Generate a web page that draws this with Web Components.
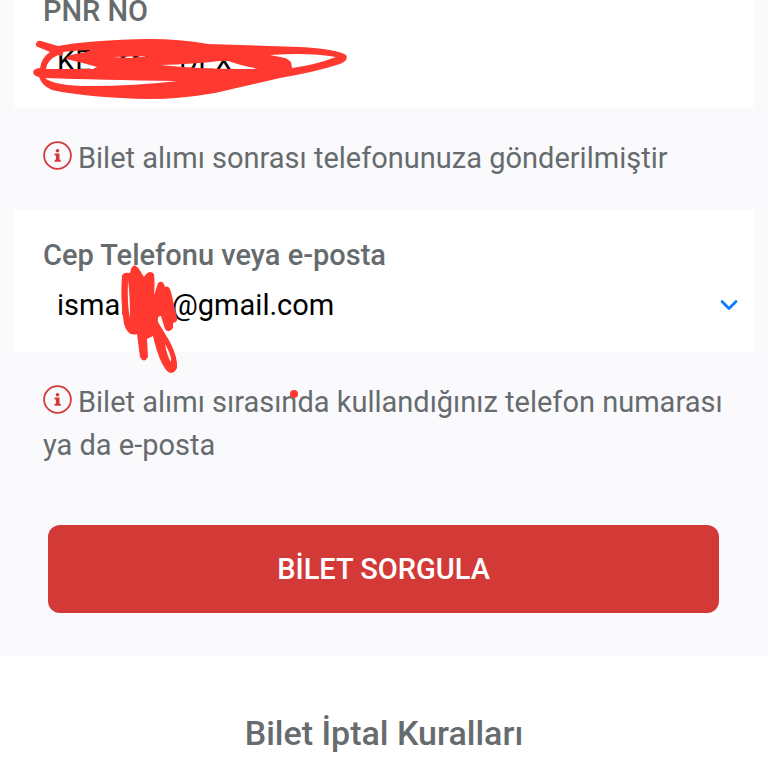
<!DOCTYPE html>
<html lang="tr">
<head>
<meta charset="utf-8">
<meta name="viewport" content="width=device-width, initial-scale=1">
<title>Bilet Sorgula</title>
<style>
  body {
    margin: 0;
    position: relative;
    overflow: hidden;
    background: #fff;
    color: #666b6e;
    font: 29px/43px Roboto, "Liberation Sans", sans-serif;
  }
</style>
</head>
<body>
<ticket-query></ticket-query>
<ink-marks></ink-marks>

<script>
// Small base class: stamps the static `html` of each element into a shadow root
class BaseElement extends HTMLElement {
  constructor() {
    super();
    const tpl = document.createElement('template');
    tpl.innerHTML = this.constructor.html;
    this.attachShadow({ mode: 'open' }).appendChild(tpl.content.cloneNode(true));
  }
}

// <form-field label="" value="" type="" picker>
class FormField extends BaseElement {
  static html = `
    <style>
      :host { display: block; padding: 24px 14px 19px 29px; background: #fff; }
      label { display: block; line-height: 44px; font-weight: 500; }
      .row { display: flex; align-items: center; padding-left: 14px; }
      input { flex: 1; min-width: 0; height: 56px; padding: 0; border: 0; outline: 0; background: none; color: #000; font: inherit; }
      button { display: flex; padding: 8px 2px; border: 0; background: none; cursor: pointer; }
      button[hidden] { display: none; }
    </style>
    <label for="field"></label>
    <div class="row">
      <input id="field">
      <button type="button" aria-label="Seç" hidden>
        <svg width="18" height="12" viewBox="0 0 18 12" fill="none" stroke="#0a7aff" stroke-width="2.7" stroke-linecap="round" stroke-linejoin="round"><path d="M2 2.5l7 7 7-7"/></svg>
      </button>
    </div>
  `;

  connectedCallback() {
    const input = this.shadowRoot.querySelector('input');
    this.shadowRoot.querySelector('label').textContent = this.getAttribute('label');
    input.type = this.getAttribute('type') || 'text';
    input.value = this.getAttribute('value') || '';
    this.shadowRoot.querySelector('button').hidden = !this.hasAttribute('picker');
  }
}

class InfoNote extends BaseElement {
  static html = `
    <style>
      :host { display: block; padding: 29px; }
      p { margin: 0; }
      svg { vertical-align: -2px; margin-right: 6px; }
    </style>
    <p><svg width="29" height="29" viewBox="0 0 29 29" aria-hidden="true"><circle cx="14.5" cy="14.5" r="13.4" fill="none" stroke="#d33a3c" stroke-width="1.8"/><circle cx="14.5" cy="9.7" r="1.8" fill="#d33a3c"/><path fill="#d33a3c" d="M11.6 12.6h4.9v6.1h1.3v2h-6.2v-2h1.3v-4.1h-1.3z"/></svg><slot></slot></p>
  `;
}

class PrimaryButton extends BaseElement {
  static html = `
    <style>
      :host { display: block; }
      button { display: block; width: 100%; height: 88px; border: 0; border-radius: 12px; background: #d33a37; color: #fff; font: inherit; font-weight: 500; cursor: pointer; }
    </style>
    <button type="submit"><slot></slot></button>
  `;
}

class TicketQuery extends BaseElement {
  static html = `
    <style>
      /* the page is scrolled a little past the top of the first card */
      :host { display: block; margin-top: -35px; }
      form { padding: 0 14px 43px; background: #fafafc; }
      primary-button { margin: 29px 35px 0 34px; }
      h2 { margin: 0; padding: 56px 14px 12px; font-size: 34px; line-height: 43px; font-weight: 500; text-align: center; }
    </style>
    <form>
      <form-field label="PNR NO" value="KE*******DEX"></form-field>
      <info-note>Bilet alımı sonrası telefonunuza gönderilmiştir</info-note>
      <form-field label="Cep Telefonu veya e-posta" type="text" value="ismail***@gmail.com" picker></form-field>
      <info-note>Bilet alımı sırasında kullandığınız telefon numarası ya da e-posta</info-note>
      <primary-button>BİLET SORGULA</primary-button>
    </form>
    <h2>Bilet İptal Kuralları</h2>
  `;
}

// Red pen strokes lying over the two private values
class InkMarks extends BaseElement {
  static html = `
    <style>
      :host { position: absolute; top: 0; left: 0; pointer-events: none; }
      svg { display: block; }
    </style>
    <svg width="360" height="420" viewBox="0 0 360 420" fill="#ff3830" aria-hidden="true">
      <path fill-rule="evenodd" d="M36 44Q37 40 41 41L58 46Q90 40 150 39Q180 39 208 44L300 47Q336 49 346 55Q349 60 340 64Q315 72 280 78L215 93Q180 99 150 99Q90 98 52 90Q42 86 39 77Q31 75 34 70Q37 68 40 68Q42 57 50 52L38 47Q35 46 36 44Z
        M46 69Q47 60 58 55L61 56Q64 54 63 52Q78 50 92 50Q84 53 75 54Q66 56 66 59Q80 62 97 67L93 69Z
        M160 65Q195 64 219 61L228 61Q242 66 258 69Q220 69 200 68Q180 67 160 65Z
        M270 55Q310 52 336 57Q315 65 292 68Q292 60 285 58Z
        M45 78Q100 80 178 81Q135 86 90 86Q55 86 45 78Z
        M112 57L150 56L130 58Z"/>
      <path d="M131 269Q134 262 139 269L144 277Q149 269 154 274Q155 283 154 295L158 283Q163 279 165 287Q169 285 171 292L177 318Q178 322 173 323L173 328Q169 334 165 329L161 316Q157 315 158 322L170 342Q178 358 177 368Q173 376 167 371Q159 362 153 336L147 339L148 357Q144 364 140 357L137 334Q128 337 124 324Q120 300 122 276Q123 272 130 273Z"/>
      <path fill="#fff" d="M128 280Q130 295 130 318Q127 305 128 280ZM165 344Q172 356 171 362Q167 356 165 344Z"/>
      <circle cx="294" cy="394" r="4"/>
    </svg>
  `;
}

customElements.define('form-field', FormField);
customElements.define('info-note', InfoNote);
customElements.define('primary-button', PrimaryButton);
customElements.define('ticket-query', TicketQuery);
customElements.define('ink-marks', InkMarks);
</script>
</body>
</html>
